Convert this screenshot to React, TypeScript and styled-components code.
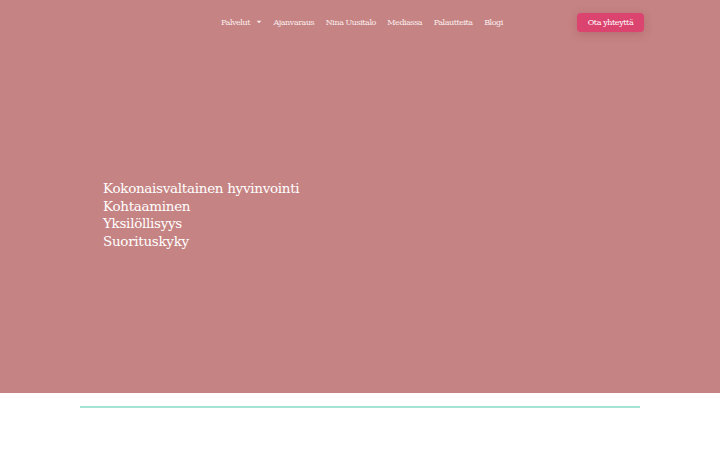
import React from 'react';
import styled, { createGlobalStyle } from 'styled-components';

const GlobalStyle = createGlobalStyle`
  html, body {
    margin: 0;
    padding: 0;
    background: #ffffff;
  }
  body {
    font-family: 'DejaVu Serif', 'Liberation Serif', serif;
  }
`;

const navItems = ['Ajanvaraus', 'Nina Uusitalo', 'Mediassa', 'Palautteita', 'Blogi'];

const App = (): JSX.Element => {
  return (
    <>
      <GlobalStyle />
      <Hero>
        <Header>
          <Nav>
            <NavLink>
              Palvelut
              <Caret viewBox="0 0 10 6">
                <path d="M1 1 L5 5 L9 1 Z" fill="currentColor" />
              </Caret>
            </NavLink>
            {navItems.map((item) => (
              <NavLink key={item}>{item}</NavLink>
            ))}
          </Nav>
          <ContactButton>Ota yhteyttä</ContactButton>
        </Header>
        <Values>
          <Value>Kokonaisvaltainen hyvinvointi</Value>
          <Value>Kohtaaminen</Value>
          <Value>Yksilöllisyys</Value>
          <Value>Suorituskyky</Value>
        </Values>
      </Hero>
      <Below>
        <Divider />
      </Below>
    </>
  );
};

const Hero = styled.section`
  background: #c68383;
  height: 393px;
  display: flex;
  flex-direction: column;
`;

const Header = styled.header`
  display: flex;
  align-items: center;
  height: 44px;
  padding: 0 76px 0 221px;
  justify-content: space-between;
`;

const Nav = styled.nav`
  display: flex;
  align-items: center;
  gap: 11.5px;
`;

const NavLink = styled.a`
  display: flex;
  align-items: center;
  gap: 6px;
  color: #fbeeee;
  font-size: 8px;
  letter-spacing: -0.45px;
  cursor: pointer;
`;

const Caret = styled.svg`
  width: 6px;
  height: 4px;
`;

const ContactButton = styled.button`
  background: #dc4470;
  color: #ffffff;
  border: none;
  border-radius: 4px;
  font-family: 'DejaVu Serif', 'Liberation Serif', serif;
  font-size: 8px;
  letter-spacing: -0.4px;
  width: 67px;
  height: 19px;
  box-shadow: 0 2px 8px rgba(120, 40, 60, 0.25);
  cursor: pointer;
`;

const Values = styled.div`
  display: flex;
  flex-direction: column;
  padding: 136px 0 0 103px;
`;

const Value = styled.div`
  color: #ffffff;
  font-size: 13.5px;
  letter-spacing: -0.3px;
  line-height: 17.6px;
`;

const Below = styled.section`
  height: 44px;
  padding-top: 13px;
  display: flex;
  justify-content: center;
`;

const Divider = styled.div`
  width: 560px;
  height: 2px;
  background: #a4e2d1;
`;

export default App;
